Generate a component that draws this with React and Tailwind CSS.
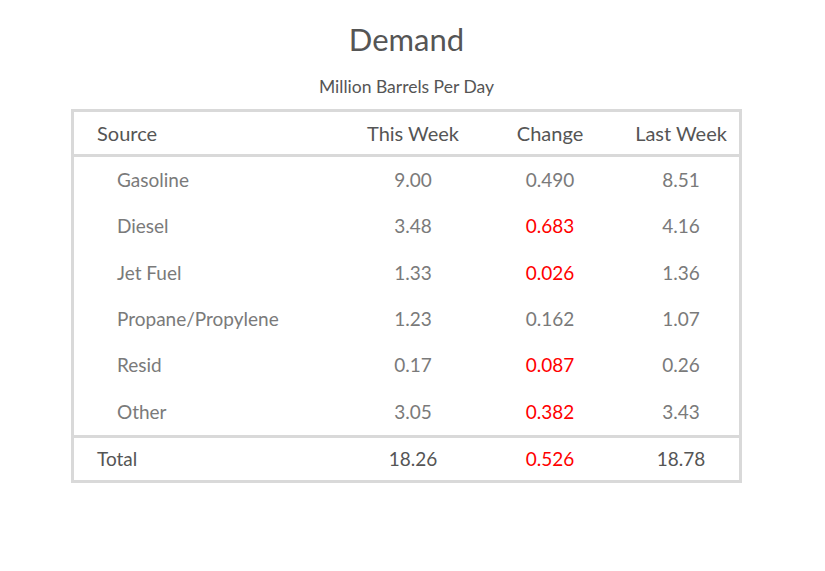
import React from 'react'

const rows = [
  { name: 'Gasoline', thisWeek: '9.00', change: '0.490', up: true, lastWeek: '8.51' },
  { name: 'Diesel', thisWeek: '3.48', change: '0.683', up: false, lastWeek: '4.16' },
  { name: 'Jet Fuel', thisWeek: '1.33', change: '0.026', up: false, lastWeek: '1.36' },
  { name: 'Propane/Propylene', thisWeek: '1.23', change: '0.162', up: true, lastWeek: '1.07' },
  { name: 'Resid', thisWeek: '0.17', change: '0.087', up: false, lastWeek: '0.26' },
  { name: 'Other', thisWeek: '3.05', change: '0.382', up: false, lastWeek: '3.43' },
]

const cols = 'grid grid-cols-[271px_136px_138px_120px] items-center'

export default function App() {
  return (
    <div className="min-h-screen bg-white font-['Lato',sans-serif]">
      <div className="ml-[71px] w-[671px] pt-[19px]">
        <h1 className="text-center text-[31px] leading-[40px] text-[#555]">Demand</h1>
        <p className="mt-[18px] text-center text-[17.5px] leading-[20px] text-[#555]">Million Barrels Per Day</p>

        <div className="mt-[12px] border-[3px] border-[#d9d9d9]">
          {/* header */}
          <div className={`${cols} h-[45px] border-b-[3px] border-[#d9d9d9] text-[20px] text-[#555]`}>
            <div className="pl-[23px]">Source</div>
            <div className="text-center">This Week</div>
            <div className="text-center">Change</div>
            <div className="pl-[4px] text-center">Last Week</div>
          </div>

          {/* body */}
          <div className="border-b-[3px] border-[#d9d9d9]">
            {rows.map(r => (
              <div key={r.name} className={`${cols} h-[46.33px] text-[19px] text-[#7a7a7a]`}>
                <div className="pl-[43px]">{r.name}</div>
                <div className="text-center">{r.thisWeek}</div>
                <div className={`text-center ${r.up ? 'text-[#7a7a7a]' : 'text-[#ff0000]'}`}>{r.change}</div>
                <div className="pl-[4px] text-center">{r.lastWeek}</div>
              </div>
            ))}
          </div>

          {/* total */}
          <div className={`${cols} h-[42px] text-[19px] text-[#555]`}>
            <div className="pl-[23px]">Total</div>
            <div className="text-center">18.26</div>
            <div className="text-center text-[#ff0000]">0.526</div>
            <div className="pl-[4px] text-center">18.78</div>
          </div>
        </div>
      </div>
    </div>
  )
}
